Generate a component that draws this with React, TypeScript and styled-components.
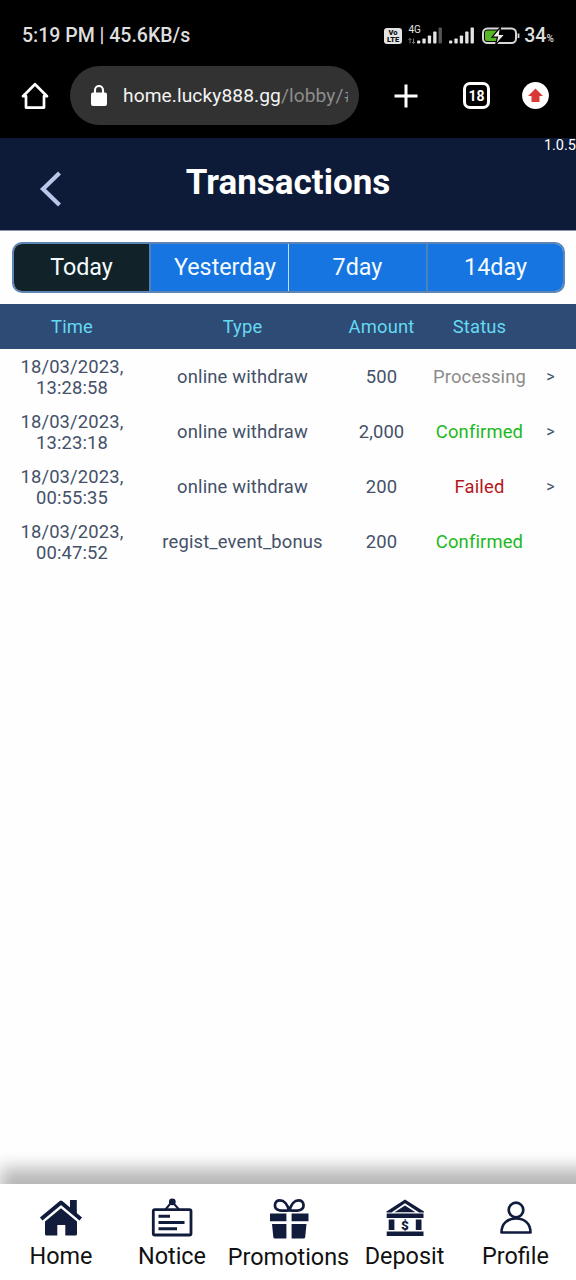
import React from 'react';
import styled, { createGlobalStyle } from 'styled-components';

const GlobalStyle = createGlobalStyle`
  * { box-sizing: border-box; }
  body { margin: 0; background: #fff; font-family: Roboto, sans-serif; }
  svg { display: block; flex: none; }
`;

const Screen = styled.div`
  width: 576px;
  height: 1280px;
  display: flex;
  flex-direction: column;
  overflow: hidden;
  background: #fefefe;
`;

const StatusBar = styled.div`
  height: 66px;
  padding: 5px 22px 0 22px;
  display: flex;
  align-items: center;
  justify-content: space-between;
  background: #000;
  color: #dedede;
`;

const Clock = styled.span`
  font-size: 19.5px;
  font-weight: 500;
  white-space: nowrap;
`;

const StatusIcons = styled.div`
  display: flex;
  align-items: center;
`;

const Signals = styled.div`
  display: flex;
  align-items: center;
  gap: 6px;
  margin: 0 7px 0 6px;
`;

const Mobile = styled.div`
  display: flex;
  align-items: center;
  svg { overflow: visible; }
`;

const Battery = styled.span`
  margin-left: 4px;
  font-size: 19.5px;
  font-weight: 500;
  letter-spacing: 0.1px;
  small { font-size: 10px; }
`;

const BrowserBar = styled.div`
  height: 72px;
  padding: 0 27px 13px 21px;
  display: flex;
  align-items: center;
  background: #000;
  color: #fff;
`;

const AddressPill = styled.div`
  width: 289px;
  height: 59px;
  margin: 0 35px 0 21px;
  padding: 0 11px 0 21px;
  border-radius: 30px;
  display: flex;
  align-items: center;
  gap: 16px;
  background: #323232;
`;

const Address = styled.span`
  width: 225px;
  overflow: hidden;
  white-space: nowrap;
  font-size: 19.2px;
  letter-spacing: 0.08px;
  color: #f4f4f4;
`;

const Path = styled.span`
  color: #8d8d8d;
`;

const TabCount = styled.div`
  width: 27px;
  height: 27px;
  margin: 0 32px 0 45px;
  display: grid;
  place-items: center;
  border: 3px solid #fff;
  border-radius: 7px;
  font-size: 14px;
  font-weight: 700;
`;

const TitleBar = styled.header`
  position: relative;
  height: 93px;
  display: grid;
  grid-template-columns: 100px 1fr 100px;
  align-items: center;
  background: #0d1a38;
  border-bottom: 1px solid #8c95a8;
  color: #fff;
`;

const Back = styled.div`
  padding: 9px 0 0 39px;
`;

const Title = styled.h1`
  margin: 0 0 3px;
  text-align: center;
  font-size: 35px;
  font-weight: 700;
  line-height: 42px;
`;

const Version = styled.span`
  position: absolute;
  top: -1px;
  right: 0;
  font-size: 14.5px;
  line-height: 17px;
`;

const Ranges = styled.div`
  height: 51px;
  margin: 11px 11px 11px 12px;
  display: grid;
  grid-template-columns: 135px 139px 138px 1fr;
  border: 2px solid #5d86b4;
  border-radius: 10px;
  overflow: hidden;
`;

const Range = styled.button<{ $active?: boolean; $shift?: number; $line?: string }>`
  min-width: 0;
  border: 0;
  border-left: ${(p) => (p.$line ? `${p.$line}` : '0')};
  padding: 0 0 1px ${(p) => p.$shift ?? 0}px;
  background: ${(p) => (p.$active ? '#122229' : '#1675e0')};
  color: #f4fbff;
  font: 400 23.3px Roboto, sans-serif;
`;

const columns = '144px 197px 81px 115px 27px';

const HeadRow = styled.div`
  height: 45px;
  display: grid;
  grid-template-columns: ${columns};
  align-items: center;
  text-align: center;
  background: #2d4b75;
  color: #66d9f2;
  font-size: 18.4px;
  letter-spacing: 0.15px;
`;

const Row = styled(HeadRow)`
  height: 55px;
  background: none;
  color: #445168;
  line-height: 21px;
  white-space: nowrap;
`;

const Time = styled.span`
  white-space: pre-line;
`;

const tones = { Processing: '#8b8b8b', Confirmed: '#1cb822', Failed: '#b5161b' };
type State = keyof typeof tones;

const Status = styled.span<{ $state: State }>`
  color: ${(p) => tones[p.$state]};
`;

const More = styled.span`
  font-size: 16px;
`;

const Nav = styled.nav`
  width: 600px;
  height: 96px;
  margin-top: auto;
  padding-right: 24px;
  display: grid;
  grid-template-columns: 122px 100px 133px 99px 123px;
  background: #fff;
  box-shadow: 0 -16px 16px #b8b8b8;
`;

const NavItem = styled.div<{ $drop?: number }>`
  min-width: 0;
  padding-top: ${(p) => 12 + (p.$drop ?? 0)}px;
  display: flex;
  flex-direction: column;
  align-items: center;
  color: #111;
  font-size: 23.4px;
  line-height: 28px;
  white-space: nowrap;
  svg { height: 44px; margin-bottom: 1.500px; }
`;

const ink = '#111c3d';

const VolteIcon = () => (
  <svg width="18" height="16" viewBox="0 0 18 16">
    <rect width="18" height="16" rx="3" fill="#e4e4e4" />
    <text x="9" y="7.2" textAnchor="middle" fontSize="7.5" fontWeight="900" fontFamily="Roboto" fill="#111">Vo</text>
    <text x="9" y="14" textAnchor="middle" fontSize="7.5" fontWeight="900" fontFamily="Roboto" fill="#111">LTE</text>
  </svg>
);

const Bars = ({ dim }: { dim?: boolean }) => (
  <svg width="26" height="17" viewBox="0 0 26 17">
    {[3, 5, 8, 12, 16].map((h, i) => (
      <rect key={h} x={i * 5.4} y={16.5 - h} width="3.3" height={h} rx="0.8" fill={dim && i === 4 ? '#555' : '#e4e4e4'} />
    ))}
  </svg>
);

const NetworkIcon = () => (
  <svg width="9" height="20" viewBox="0 0 9 20">
    <text x="0.500" y="7" fontSize="10" fontFamily="Roboto" fill="#e4e4e4">4G</text>
    <path d="M2 17.500v-5M.5 14 2 12.500l1.500 1.500M5.500 12.500v5M4 16 5.500 17.500 7 16" stroke="#777" strokeWidth="1" fill="none" />
  </svg>
);

const BatteryIcon = () => (
  <svg width="38" height="18" viewBox="0 0 38 18">
    <rect x="1" y="1.500" width="33" height="14.500" rx="4.500" fill="none" stroke="#d8d8d8" strokeWidth="2" />
    <path d="M5 3.500h10v10.500H5a2 2 0 0 1-2-2V5.500a2 2 0 0 1 2-2Z" fill="#55b824" />
    <path d="M18.500 0 10 10.200h5.500L13.500 18 23 7.300h-5.500Z" fill="#eee" stroke="#000" strokeWidth="1.200" />
    <path d="M36.500 6.500v4.500" stroke="#d8d8d8" strokeWidth="1.800" />
  </svg>
);

const BrowserHome = () => (
  <svg width="28" height="28" viewBox="0 0 28 28" fill="none" stroke="#fff" strokeWidth="2.700" strokeLinejoin="round">
    <path d="M2 14.200 14 2.300l12 11.900h-3v11.400H5V14.200Z" />
  </svg>
);

const Lock = () => (
  <svg width="16" height="22" viewBox="0 0 16 22">
    <rect y="7.500" width="16" height="13.500" rx="2" fill="#fff" />
    <path d="M4 8V5a4 4 0 0 1 8 0v3" fill="none" stroke="#fff" strokeWidth="2.100" />
  </svg>
);

const Plus = () => (
  <svg width="24" height="24" viewBox="0 0 24 24">
    <path d="M12 .5v23M.5 12h23" stroke="#fff" strokeWidth="3" />
  </svg>
);

const Update = () => (
  <svg width="27" height="27" viewBox="0 0 27 27">
    <circle cx="13.500" cy="13.500" r="13.400" fill="#fff" />
    <path d="M13.500 6.500 21 14h-3.500v6h-8v-6H6Z" fill="#d93a35" />
  </svg>
);

const Chevron = () => (
  <svg width="24" height="36" viewBox="0 0 24 36">
    <path d="M20.500 2 4 18l16.500 16" fill="none" stroke="#bac6e8" strokeWidth="4.200" />
  </svg>
);

const HomeIcon = () => (
  <svg width="44" height="44" viewBox="0 0 44 44" fill={ink}>
    <path d="M31 4h6.800v15L31 13Z" />
    <path d="M2.200 23 22 6.500 41.800 23" fill="none" stroke={ink} strokeWidth="4" strokeLinejoin="round" />
    <path d="M22 12.200 38 25.500V38a1.500 1.500 0 0 1-1.500 1.500h-10.200V29h-8v10.500H7.500A1.500 1.500 0 0 1 6 38V25.500Z" />
  </svg>
);

const NoticeIcon = () => (
  <svg width="44" height="44" viewBox="0 0 44 44" fill="none" stroke={ink}>
    <rect x="3.300" y="13.700" width="37.700" height="25.300" rx="1.500" strokeWidth="2.800" />
    <path d="M15.500 13.500 22 5.500l7 8" strokeWidth="2" />
    <circle cx="22.300" cy="5.800" r="3.400" fill={ink} stroke="none" />
    <path d="M8.500 20.200H20M8.500 26.500H34.500M8.500 32.800H27" strokeWidth="2.900" />
  </svg>
);

const GiftIcon = () => (
  <svg width="44" height="44" viewBox="0 0 44 44" fill={ink}>
    <path d="M3 16.500h16.400v7.700H3ZM24.600 16.500H41.500v7.700H24.600ZM5 27h14.400v14.500H8A1.700 1.700 0 0 1 6.300 40ZM24.600 27H39.500l-1.300 13a1.700 1.700 0 0 1-1.700 1.500H24.600Z" />
    <path d="M22 13.500C20.500 7.500 17 3.300 13 3.300c-6 0-7 8.500-1 9.900 3 .7 7 .5 10 .3Zm.5 0C24 7.500 27.500 3.300 31.500 3.300c6 0 7 8.500 1 9.900-3 .7-7 .5-10 .3Z" fill="none" stroke={ink} strokeWidth="2.700" />
  </svg>
);

const BankIcon = () => (
  <svg width="44" height="44" viewBox="0 0 44 44" fill={ink}>
    <path d="M3.500 15.500 22 3.500l19 12v1h-5L22 7.300 8.500 16.500h-5Z" />
    <path d="M11.500 16.200 22 9.500l10.500 6.700Z" />
    <path d="M3.700 17.600h36.800v4.400H3.700ZM3.700 35.500h36.800v4.400H3.700ZM5.700 23.500h5.700V34H5.700ZM32.800 23.500h5.700V34h-5.700Z" />
    <text x="22" y="33.500" textAnchor="middle" fontSize="13.500" fontWeight="900" fontFamily="Roboto">$</text>
  </svg>
);

const ProfileIcon = () => (
  <svg width="44" height="44" viewBox="0 0 44 44" fill="none" stroke={ink} strokeWidth="2.700">
    <circle cx="22" cy="14" r="7.300" />
    <path d="M7.500 36.500C7.500 27.500 13.500 22.500 22 22.500s14.500 5 14.500 14Z" strokeLinejoin="round" />
  </svg>
);

const rows: { date: string; time: string; type: string; amount: string; state: State; more: boolean }[] = [
  { date: '18/03/2023,', time: '13:28:58', type: 'online withdraw', amount: '500', state: 'Processing', more: true },
  { date: '18/03/2023,', time: '13:23:18', type: 'online withdraw', amount: '2,000', state: 'Confirmed', more: true },
  { date: '18/03/2023,', time: '00:55:35', type: 'online withdraw', amount: '200', state: 'Failed', more: true },
  { date: '18/03/2023,', time: '00:47:52', type: 'regist_event_bonus', amount: '200', state: 'Confirmed', more: false },
];

export default function App() {
  return (
    <Screen>
      <GlobalStyle />
      <StatusBar>
        <Clock>5:19 PM | 45.6KB/s</Clock>
        <StatusIcons>
          <VolteIcon />
          <Signals>
            <Mobile>
              <NetworkIcon />
              <Bars dim />
            </Mobile>
            <Bars />
          </Signals>
          <BatteryIcon />
          <Battery>34<small>%</small></Battery>
        </StatusIcons>
      </StatusBar>
      <BrowserBar>
        <BrowserHome />
        <AddressPill>
          <Lock />
          <Address>home.lucky888.gg<Path>/lobby/#</Path></Address>
        </AddressPill>
        <Plus />
        <TabCount>18</TabCount>
        <Update />
      </BrowserBar>
      <TitleBar>
        <Back><Chevron /></Back>
        <Title>Transactions</Title>
        <Version>1.0.5</Version>
      </TitleBar>
      <Ranges>
        <Range $active>Today</Range>
        <Range $line="2px solid #4b83bd" $shift={11}>Yesterday</Range>
        <Range $line="1px solid #c4dff5">7day</Range>
        <Range $line="2px solid #4b83bd">14day</Range>
      </Ranges>
      <HeadRow>
        <span>Time</span>
        <span>Type</span>
        <span>Amount</span>
        <span>Status</span>
      </HeadRow>
      {rows.map((r) => (
        <Row key={r.time}>
          <Time>{`${r.date}\n${r.time}`}</Time>
          <span>{r.type}</span>
          <span>{r.amount}</span>
          <Status $state={r.state}>{r.state}</Status>
          {r.more && <More>&gt;</More>}
        </Row>
      ))}
      <Nav>
        <NavItem><HomeIcon />Home</NavItem>
        <NavItem><NoticeIcon />Notice</NavItem>
        <NavItem $drop={1}><GiftIcon />Promotions</NavItem>
        <NavItem><BankIcon />Deposit</NavItem>
        <NavItem><ProfileIcon />Profile</NavItem>
      </Nav>
    </Screen>
  );
}
